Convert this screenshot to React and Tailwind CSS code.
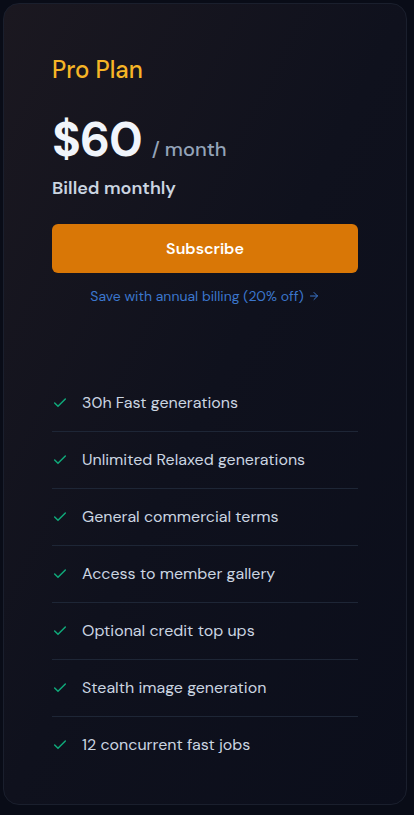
import React from 'react';
import { Check, ArrowRight } from 'lucide-react';

const features = [
  '30h Fast generations',
  'Unlimited Relaxed generations',
  'General commercial terms',
  'Access to member gallery',
  'Optional credit top ups',
  'Stealth image generation',
  '12 concurrent fast jobs',
];

export default function App() {
  return (
    <div
      className="min-h-screen bg-[#090c17] pl-[3px] pr-[7px] pt-[3px] pb-[10px]"
      style={{ fontFamily: '"DM Sans", Inter, "Noto Sans", sans-serif' }}
    >
      <div className="h-[802px] rounded-2xl border border-[#1a1f2d] bg-gradient-to-br from-[#1b1820] via-[#0f111d] to-[#0b0e1b] px-12 pt-[50px]">
        {/* Plan header */}
        <h2 className="text-2xl leading-8 font-medium text-[#f6b526]">Pro Plan</h2>

        <div className="mt-[30px] flex items-baseline gap-2.5">
          <span className="text-5xl leading-none font-bold text-[#f1f5fb] tracking-tight">$60</span>
          <span className="text-xl text-[#94a3b8] font-medium">/ month</span>
        </div>

        <p className="mt-3 text-lg leading-6 font-semibold text-[#cbd5e1]">Billed monthly</p>

        <button className="mt-6 h-[49px] w-full rounded-md bg-[#d97706] text-base font-semibold text-white">
          Subscribe
        </button>

        <a className="mt-[13px] flex items-center justify-center gap-1 text-sm leading-5 text-[#3b76cc]">
          Save with annual billing (20% off) <ArrowRight size={12} strokeWidth={2} />
        </a>

        {/* Feature list */}
        <ul className="mt-[69px]">
          {features.map((f, idx) => (
            <li
              key={idx}
              className={`flex items-center gap-[14px] py-4 text-base leading-6 text-[#cbd5e1] ${
                idx < features.length - 1 ? 'border-b border-[#1e2636]' : ''
              }`}
            >
              <Check size={16} strokeWidth={2.25} className="text-[#10a97a] shrink-0" />
              {f}
            </li>
          ))}
        </ul>
      </div>
    </div>
  );
}
